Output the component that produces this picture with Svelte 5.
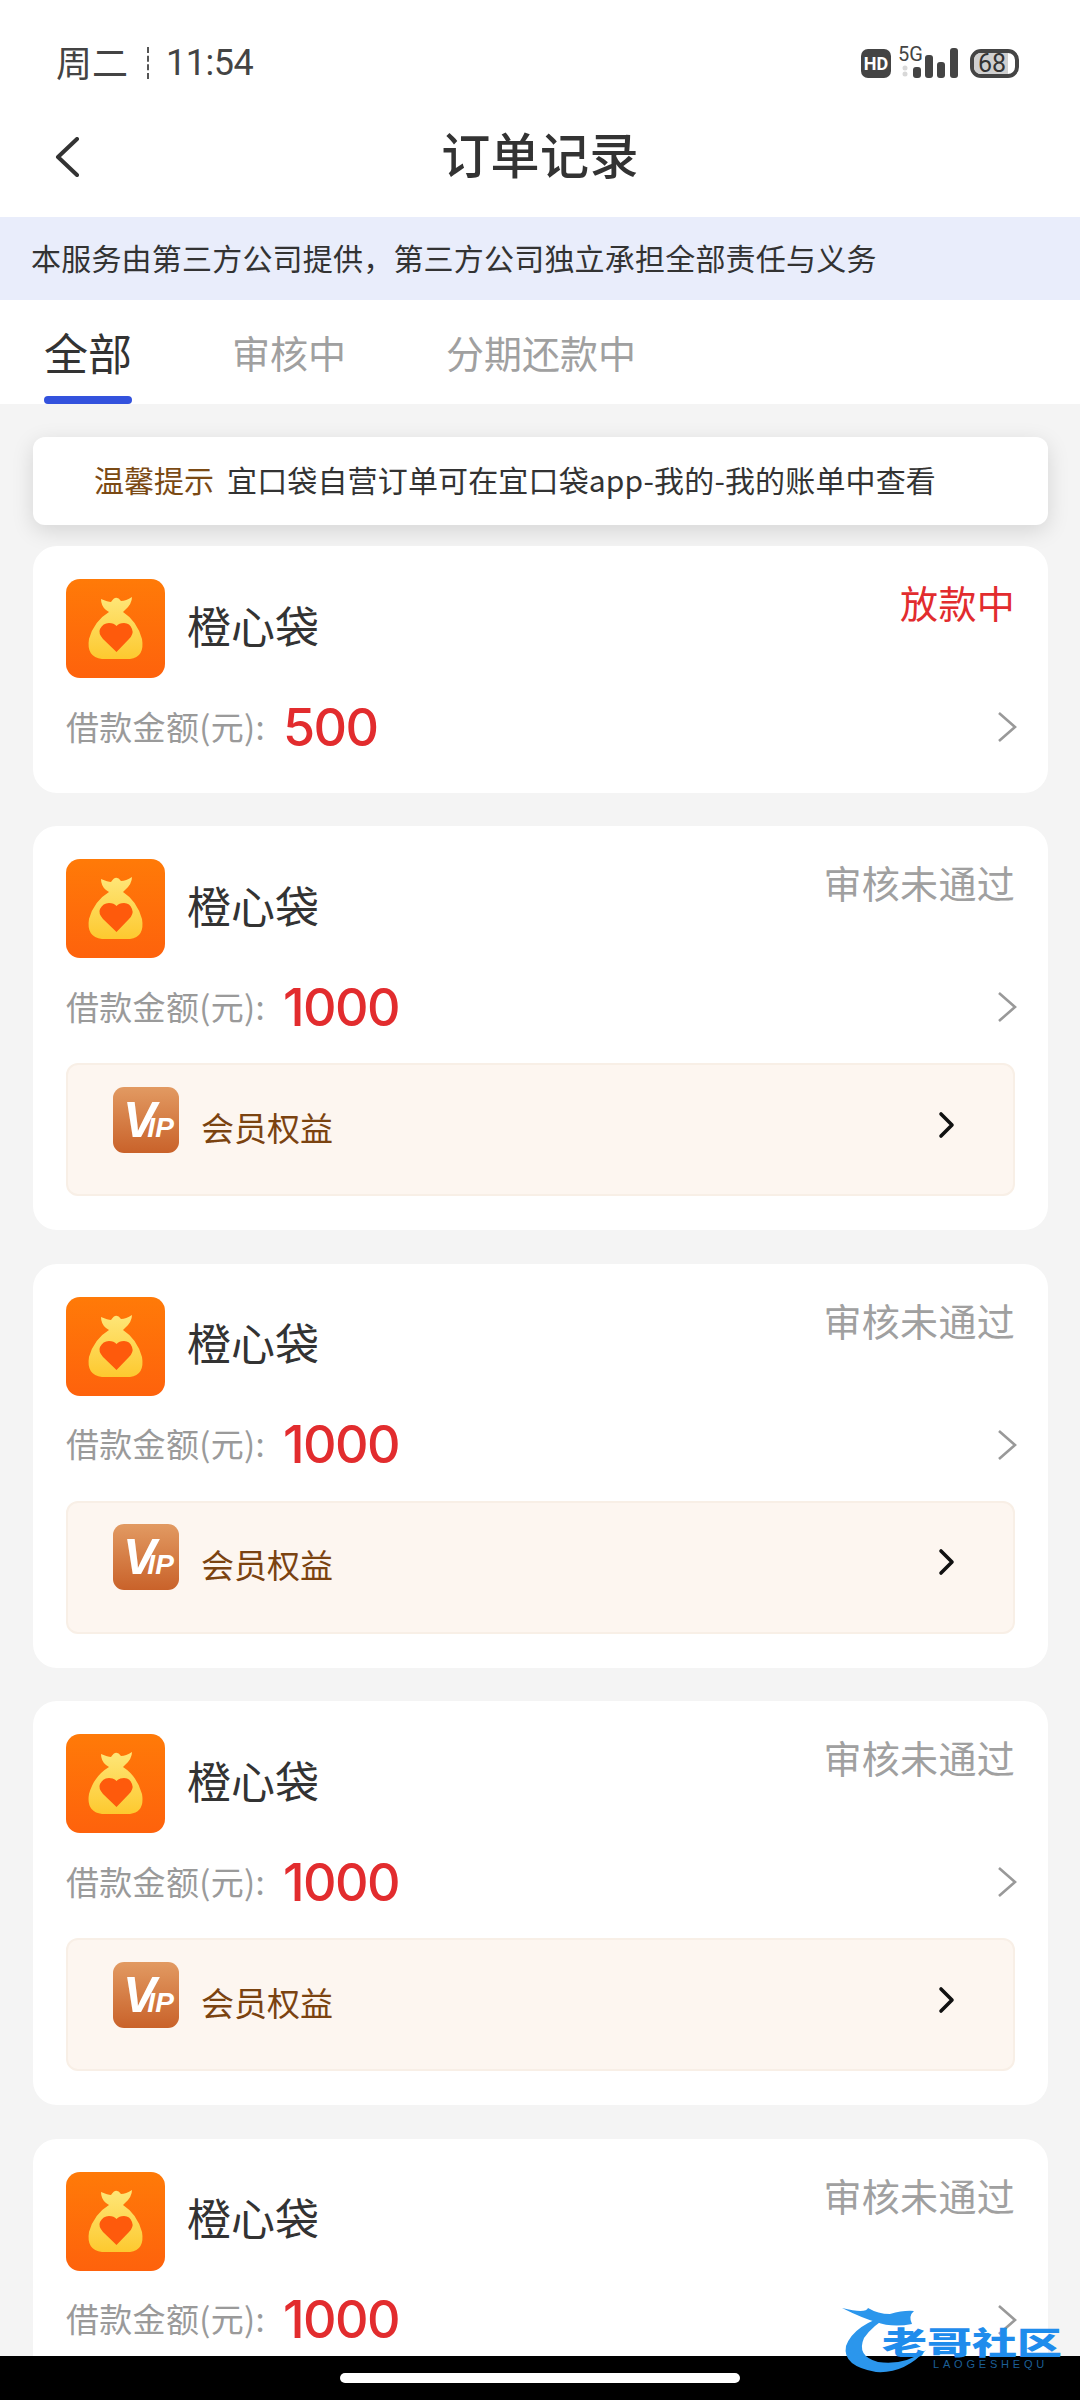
<script>
  const tabs = [
    { label: "全部", active: true },
    { label: "审核中", active: false },
    { label: "分期还款中", active: false },
  ];

  // the last card runs under the home bar, so its member row is never seen
  const orders = [
    { amount: "500", status: "放款中", pending: true, member: false },
    { amount: "1000", status: "审核未通过", pending: false, member: true },
    { amount: "1000", status: "审核未通过", pending: false, member: true },
    { amount: "1000", status: "审核未通过", pending: false, member: true },
    { amount: "1000", status: "审核未通过", pending: false, member: false },
  ];
</script>

<div class="page">
  <div class="status-bar">
    <span class="day">周二</span>
    <span class="divider"></span>
    <span class="time">11:54</span>
    <div class="status-icons">
      <span class="hd">HD</span>
      <div class="signal">
        <span class="five-g">5G</span>
        <svg width="62" height="30" viewBox="0 0 62 30">
          <circle cx="7" cy="20" r="2.5" fill="#d8d8d8" />
          <circle cx="7" cy="26" r="2.5" fill="#d8d8d8" />
          <rect x="15" y="19" width="8" height="11" rx="3" fill="#444" />
          <rect x="27" y="7" width="8" height="23" rx="3" fill="#444" />
          <rect x="39" y="14" width="8" height="16" rx="3" fill="#444" />
          <rect x="52" y="0" width="8" height="30" rx="3" fill="#444" />
        </svg>
      </div>
      <span class="battery"><span class="battery-fill"></span><span class="battery-text">68</span></span>
    </div>
  </div>

  <header class="nav">
    <svg class="back" width="26" height="40" viewBox="0 0 26 40">
      <path d="M23 2 L4 20 L23 38" fill="none" stroke="#333" stroke-width="4" stroke-linecap="round" stroke-linejoin="round" />
    </svg>
    <h1>订单记录</h1>
  </header>

  <div class="notice">本服务由第三方公司提供，第三方公司独立承担全部责任与义务</div>

  <nav class="tabs">
    {#each tabs as tab}
      <div class="tab" class:active={tab.active}>{tab.label}</div>
    {/each}
  </nav>

  <div class="list">
    <div class="tip">
      <span class="tip-title">温馨提示</span>
      <span class="tip-body">宜口袋自营订单可在宜口袋app-我的-我的账单中查看</span>
    </div>

    {#each orders as order}
      <section class="card" class:short={order.pending}>
        <div class="card-top">
          <svg class="logo" width="99" height="99" viewBox="0 0 99 99">
            <defs>
              <linearGradient id="bag-bg" x1="0" y1="0" x2="0" y2="1">
                <stop offset="0" stop-color="#ff7a08" />
                <stop offset="1" stop-color="#fe620c" />
              </linearGradient>
              <linearGradient id="bag-fill" x1="0" y1="0" x2="0" y2="1">
                <stop offset="0" stop-color="#fee678" />
                <stop offset="1" stop-color="#fdc92f" />
              </linearGradient>
            </defs>
            <rect width="99" height="99" rx="14" fill="url(#bag-bg)" />
            <path d="M35 20 Q42 23 45 23 Q50 15 55 22 Q60 22 66 18 Q66 25 59 31 L57 33 Q71 42 76 60 Q79 78 64 80 L36 80 Q20 78 23 60 Q28 42 43 33 L40 31 Q35 27 35 20 Z" fill="url(#bag-fill)" />
            <path d="M50.5 73 L37 60 Q32 54 34 50 Q37 44 43 44 Q48 44 50.5 47 Q53 44 58 44 Q64 44 66 50 Q68 55 63 60 Z" fill="#fe5a0c" />
          </svg>
          <span class="name">橙心袋</span>
          <span class="state" class:pending={order.pending}>{order.status}</span>
        </div>

        <div class="amount-row">
          <span class="amount-label">借款金额(元):</span>
          <span class="amount">{order.amount}</span>
          <svg class="chevron" width="20" height="32" viewBox="0 0 20 32">
            <path d="M2 2 L18 16 L2 30" fill="none" stroke="#999" stroke-width="2.6" />
          </svg>
        </div>

        {#if order.member}
          <div class="member">
            <svg class="vip" width="66" height="66" viewBox="0 0 66 66">
              <defs>
                <linearGradient id="vip-bg" x1="0" y1="0" x2="0" y2="1">
                  <stop offset="0" stop-color="#e29a62" />
                  <stop offset="1" stop-color="#c9622a" />
                </linearGradient>
              </defs>
              <rect width="66" height="66" rx="11" fill="url(#vip-bg)" />
              <text x="10" y="50" class="vip-text"><tspan class="vip-v">V</tspan><tspan class="vip-ip" dx="-9">IP</tspan></text>
            </svg>
            <span class="member-label">会员权益</span>
            <svg class="member-arrow" width="18" height="28" viewBox="0 0 18 28">
              <path d="M3 3 L14 14 L3 25" fill="none" stroke="#111" stroke-width="3.6" stroke-linecap="round" stroke-linejoin="round" />
            </svg>
          </div>
        {/if}
      </section>
    {/each}
  </div>

  <div class="watermark">
    <svg width="100" height="80" viewBox="0 0 100 80">
      <path d="M50 14 Q12 24 4 46 Q0 66 34 72 Q62 74 84 50 Q62 66 36 62 Q14 56 22 38 Q30 26 50 14 Z" fill="#2b96ec" />
      <path d="M0 8 Q24 14 26 8 Q36 14 48 14 Q62 10 72 11 Q66 16 70 24 Q50 28 34 22 Q20 18 0 8 Z" fill="#2b96ec" />
    </svg>
    <span class="wm-text">老哥社区</span>
    <span class="wm-sub">LAOGESHEQU</span>
  </div>

  <div class="home-bar"><span class="home-pill"></span></div>
</div>

<style>
  :global(body) {
    background: #f4f4f4;
    margin: 0;
  }

  .page {
    background: #f4f4f4;
    color: #333;
    display: flex;
    flex-direction: column;
    font-family: "Noto Sans CJK SC", "Noto Sans", sans-serif;
    height: 2400px;
    overflow: hidden;
    position: relative;
    width: 1080px;
  }

  .status-bar {
    align-items: center;
    background: #fff;
    box-sizing: border-box;
    color: #444;
    display: flex;
    flex: none;
    height: 96px;
    padding: 30px 61px 0 56px;
  }

  .day {
    font-size: 36px;
    line-height: 40px;
    margin-top: -4px;
  }

  .divider {
    border-left: 2px dashed #555;
    height: 32px;
    margin: 0 17px 0 19px;
  }

  .time {
    font-family: Roboto, sans-serif;
    font-size: 36px;
    font-weight: 400;
    letter-spacing: -0.5px;
    line-height: 40px;
  }

  .status-icons {
    align-items: center;
    display: flex;
    margin-left: auto;
  }

  .hd {
    background: #444;
    border-radius: 7px;
    color: #fff;
    font-family: Roboto, sans-serif;
    font-size: 18px;
    font-weight: 700;
    height: 29px;
    line-height: 29px;
    text-align: center;
    width: 30px;
  }

  .signal {
    height: 30px;
    margin-left: 7px;
    position: relative;
    width: 62px;
  }

  .signal svg {
    display: block;
  }

  .five-g {
    color: #444;
    font-family: Roboto, sans-serif;
    font-size: 20px;
    left: 0;
    line-height: 20px;
    position: absolute;
    top: -4px;
  }

  .battery {
    border: 4px solid #444;
    border-radius: 11px;
    box-sizing: border-box;
    height: 29px;
    margin-left: 10px;
    overflow: hidden;
    position: relative;
    width: 49px;
  }

  .battery-fill {
    background: #cfcfcf;
    bottom: 0;
    left: 0;
    position: absolute;
    top: 0;
    width: 84%;
  }

  .battery-text {
    color: #333;
    font-family: Roboto, sans-serif;
    font-size: 25px;
    left: 4px;
    line-height: 21px;
    position: absolute;
    top: 0;
  }

  .nav {
    align-items: center;
    background: #fff;
    box-sizing: border-box;
    display: flex;
    flex: none;
    height: 121px;
    justify-content: center;
    padding-bottom: 8px;
    position: relative;
  }

  .back {
    left: 54px;
    position: absolute;
    top: 41px;
  }

  h1 {
    color: #333;
    font-size: 49px;
    font-weight: 500;
    letter-spacing: 0.4px;
    line-height: 60px;
    margin: 0;
  }

  .notice {
    background: #e9edfb;
    box-sizing: border-box;
    color: #333;
    flex: none;
    font-size: 30px;
    height: 83px;
    letter-spacing: 0.2px;
    line-height: 80px;
    padding-left: 31px;
    white-space: nowrap;
  }

  .tabs {
    background: #fff;
    box-sizing: border-box;
    display: flex;
    flex: none;
    gap: 100px;
    height: 104px;
    padding-left: 44px;
  }

  .tab {
    color: #a0a0a0;
    font-size: 38px;
    line-height: 104px;
    position: relative;
    white-space: nowrap;
  }

  .tab.active {
    color: #333;
    font-size: 44px;
  }

  .tab.active::after {
    background: #3352dd;
    border-radius: 4px;
    bottom: 0;
    content: "";
    height: 8px;
    left: 0;
    position: absolute;
    right: 0;
  }

  .list {
    display: flex;
    flex-direction: column;
    gap: 33.5px;
    padding: 33px 32px 0 33px;
  }

  .tip {
    align-items: center;
    background: #fff;
    border-radius: 12px;
    box-shadow: 0 6px 22px rgba(0, 0, 0, 0.13);
    box-sizing: border-box;
    color: #333;
    display: flex;
    font-size: 30px;
    gap: 13px;
    height: 88px;
    margin-bottom: -12.5px;
    padding: 0 0 5px 61px;
    white-space: nowrap;
  }

  .tip-title {
    color: #7b4a14;
  }

  .tip-body {
    letter-spacing: 0.15px;
  }

  .card {
    background: #fff;
    border-radius: 24px;
    box-sizing: border-box;
    flex: none;
    height: 404px;
    padding: 33px 33px 0;
  }

  .card.short {
    height: 246.5px;
  }

  .card-top {
    align-items: center;
    display: flex;
    height: 99px;
  }

  .logo {
    display: block;
    flex: none;
  }

  .name {
    color: #333;
    font-size: 44px;
    margin-bottom: 8px;
    margin-left: 22px;
  }

  .state {
    align-self: flex-start;
    color: #a0a0a0;
    font-size: 38px;
    letter-spacing: 0.3px;
    line-height: 46px;
    margin-left: auto;
  }

  .state.pending {
    color: #e22c2e;
  }

  .amount-row {
    align-items: center;
    display: flex;
    height: 60px;
    margin-top: 19px;
  }

  .amount-label {
    color: #9a9a9a;
    font-size: 33px;
    letter-spacing: 0.3px;
    margin-bottom: 3px;
    margin-right: 18px;
    white-space: nowrap;
  }

  .amount {
    color: #e22c2e;
    font-family: Inter, sans-serif;
    font-size: 52px;
    font-weight: 500;
    letter-spacing: -1.5px;
  }

  .chevron {
    margin-left: auto;
    margin-right: -2px;
  }

  .member {
    align-items: center;
    background: #fdf6f0;
    border: 2px solid #f8efe6;
    border-radius: 12px;
    box-sizing: border-box;
    display: flex;
    height: 133px;
    margin-top: 26px;
    padding: 0 57px 20px 45px;
  }

  .vip {
    display: block;
    flex: none;
  }

  .vip-text {
    fill: #fff;
    font-family: "Liberation Sans", sans-serif;
    font-style: italic;
    font-weight: 700;
  }

  .vip-v {
    font-size: 50px;
  }

  .vip-ip {
    font-size: 28px;
  }

  .member-label {
    color: #7b4310;
    font-size: 33px;
    margin-left: 22px;
    margin-top: 14px;
  }

  .member-arrow {
    margin-left: auto;
    margin-top: 10px;
  }

  .watermark {
    height: 100px;
    left: 842px;
    position: absolute;
    top: 2300px;
    width: 238px;
    z-index: 4;
  }

  .watermark svg {
    left: 0;
    position: absolute;
    top: 0;
  }

  .wm-text {
    color: #1f8cec;
    font-size: 45px;
    font-weight: 900;
    left: 40px;
    line-height: 50px;
    position: absolute;
    top: 16px;
    transform: scaleY(0.68);
    white-space: nowrap;
  }

  .wm-sub {
    color: #1c5f96;
    font-family: "Liberation Sans", sans-serif;
    font-size: 11px;
    left: 91px;
    letter-spacing: 3.8px;
    line-height: 12px;
    position: absolute;
    top: 58px;
    white-space: nowrap;
  }

  .home-bar {
    align-items: center;
    background: #000;
    bottom: 0;
    display: flex;
    height: 44px;
    justify-content: center;
    left: 0;
    position: absolute;
    right: 0;
    z-index: 3;
  }

  .home-pill {
    background: #fff;
    border-radius: 5px;
    height: 10px;
    width: 400px;
  }
</style>
